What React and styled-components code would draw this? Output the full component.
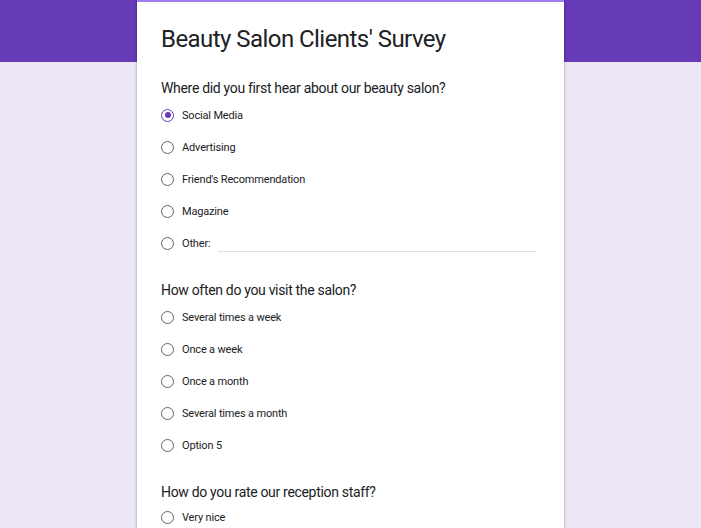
import React from "react";
import styled, { createGlobalStyle } from "styled-components";

const Global = createGlobalStyle`
  html, body { margin: 0; padding: 0; }
  body { background: #ede7f6; font-family: Roboto, "Noto Sans", Arial, sans-serif; }
`;

const Page = styled.div`
  min-height: 528px;
  background: linear-gradient(#673ab7 0, #673ab7 62px, #ede7f6 62px);
  display: flex;
  justify-content: center;
`;

const Card = styled.div`
  width: 427px;
  box-sizing: border-box;
  background: #fff;
  border-top: 2px solid #a47cf2;
  box-shadow: 0 1px 2px rgba(0,0,0,0.25), 0 1px 3px 1px rgba(0,0,0,0.1);
  padding: 21px 24px 0 24px;
  min-height: 528px;
`;

const Title = styled.h1`
  margin: 0;
  font-size: 24px;
  font-weight: 400;
  line-height: 32px;
  color: #202124;
  letter-spacing: -0.55px;
`;

const Section = styled.section`
  margin-top: ${p => p.$gap}px;
`;

const Question = styled.div`
  font-size: 14px;
  line-height: 20px;
  color: #202124;
  letter-spacing: -0.32px;
`;

const Options = styled.div`
  margin-top: ${p => p.$offset}px;
  display: flex;
  flex-direction: column;
`;

const Row = styled.label`
  height: 32px;
  display: flex;
  align-items: center;
  gap: 8px;
  font-size: 11px;
  letter-spacing: -0.17px;
  color: #202124;
`;

const Radio = styled.span`
  width: 13px;
  height: 13px;
  box-sizing: border-box;
  border-radius: 50%;
  border: 1.5px solid ${p => (p.$on ? "#673ab7" : "#5f6368")};
  display: flex;
  align-items: center;
  justify-content: center;
  flex: none;
  &::after {
    content: "";
    width: 6px;
    height: 6px;
    border-radius: 50%;
    background: #673ab7;
    display: ${p => (p.$on ? "block" : "none")};
  }
`;

const OtherLine = styled.span`
  flex: 1;
  align-self: flex-end;
  margin: 0 4px 7px 0;
  height: 1px;
  background: #e0e0e0;
`;

const sections = [
  {
    q: "Where did you first hear about our beauty salon?",
    opts: ["Social Media", "Advertising", "Friend's Recommendation", "Magazine", "Other:"],
    selected: 0,
    gap: 23,
    offset: 1,
  },
  {
    q: "How often do you visit the salon?",
    opts: ["Several times a week", "Once a week", "Once a month", "Several times a month", "Option 5"],
    gap: 21,
    offset: 1,
  },
  {
    q: "How do you rate our reception staff?",
    opts: ["Very nice"],
    gap: 21,
    offset: -1,
  },
];

export default function App() {
  return (
    <>
      <Global />
      <Page>
        <Card>
          <Title>Beauty Salon Clients' Survey</Title>
          {sections.map((s, i) => (
            <Section key={i} $gap={s.gap}>
              <Question>{s.q}</Question>
              <Options $offset={s.offset}>
                {s.opts.map((o, j) => (
                  <Row key={j}>
                    <Radio $on={s.selected === j} />
                    <span>{o}</span>
                    {o === "Other:" && <OtherLine />}
                  </Row>
                ))}
              </Options>
            </Section>
          ))}
        </Card>
      </Page>
    </>
  );
}
